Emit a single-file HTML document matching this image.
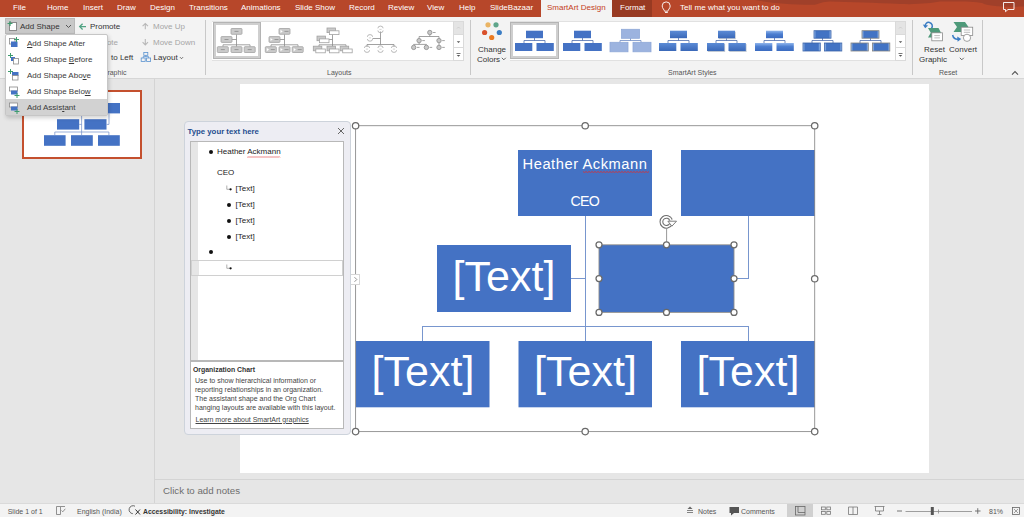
<!DOCTYPE html>
<html><head><meta charset="utf-8">
<style>
u{text-decoration-thickness:0.6px;text-underline-offset:1px}
*{margin:0;padding:0;box-sizing:border-box}
html,body{width:1024px;height:517px;overflow:hidden;background:#E6E6E6;font-family:"Liberation Sans",sans-serif;position:relative}
.a{position:absolute;white-space:nowrap}
.t{font-size:8px;line-height:10px;color:#fff;top:3px!important}
#tabs{left:0;top:0;width:1024px;height:17px;background:#B7472A}
#ribbon{left:0;top:17px;width:1024px;height:62px;background:#F3F3F3;border-bottom:1px solid #D6D6D6}
.r{font-size:8px;line-height:10px;color:#444;margin-top:1px}
.dis{color:#A6A6A6}
.sep{position:absolute;width:1px;background:#C8C8C8}
.lbl{font-size:7px;line-height:9px;color:#555}
</style></head><body>

<!-- TAB BAR -->
<div id="tabs" class="a"></div>
<div class="a t" style="left:13px;top:2px">File</div>
<div class="a t" style="left:47px;top:2px">Home</div>
<div class="a t" style="left:83px;top:2px">Insert</div>
<div class="a t" style="left:117px;top:2px">Draw</div>
<div class="a t" style="left:150px;top:2px">Design</div>
<div class="a t" style="left:189px;top:2px">Transitions</div>
<div class="a t" style="left:241px;top:2px">Animations</div>
<div class="a t" style="left:295px;top:2px">Slide Show</div>
<div class="a t" style="left:349px;top:2px">Record</div>
<div class="a t" style="left:388px;top:2px">Review</div>
<div class="a t" style="left:427px;top:2px">View</div>
<div class="a t" style="left:459px;top:2px">Help</div>
<div class="a t" style="left:490px;top:2px">SlideBazaar</div>
<div class="a" style="left:541px;top:0;width:71px;height:17px;background:#F3F3F3"></div>
<div class="a t" style="left:547px;top:2px;color:#C43E1C">SmartArt Design</div>
<div class="a" style="left:612px;top:0;width:40px;height:17px;background:#983A22"></div>
<div class="a t" style="left:620px;top:2px">Format</div>
<div class="a t" style="left:680px;top:2px;font-size:8.1px">Tell me what you want to do</div>
<svg class="a" style="left:0;top:0" width="1024" height="17">
<path d="M755 0C770 3 790 5 815 4.8C820 3.5 822 1.8 830 1.6C850 2 875 3 900 4C920 4.6 930 3.2 940 1.6C955 1.2 975 1.5 982 3C988 6.2 1000 7 1024 6.6V0z" fill="#A0402A"/>
<path d="M664.5 11.2c0-1.3-2.3-2.8-2.3-5.3a4 4 0 0 1 8 0c0 2.5-2.3 4-2.3 5.3z" fill="none" stroke="#fff" stroke-width="0.9"/><path d="M665 12.5h2.8" stroke="#fff" stroke-width="0.9"/>
<path d="M1003.5 2.5h10.5v7h-6l-2.5 2.2v-2.2h-2z" fill="none" stroke="#fff" stroke-width="0.9"/>
</svg>

<!-- RIBBON -->
<div id="ribbon" class="a"></div>

<!-- Group 1 -->
<div class="a" style="left:5px;top:18px;width:70px;height:16px;background:#C8C8C8;border:1px solid #B9B9B9"></div>
<svg class="a" style="left:6px;top:20px" width="14" height="12"><rect x="3.5" y="2.5" width="7" height="8" fill="#fff" stroke="#8A8A8A"/><path d="M4 1v5M1.5 3.5h5" stroke="#3E9C6E" stroke-width="1.2"/></svg>
<div class="a r" style="left:20px;top:21px;color:#333">Add Shape</div>
<svg class="a" style="left:65px;top:24px" width="7" height="5"><path d="M1 1l2.5 2.5L6 1" stroke="#555" fill="none"/></svg>
<svg class="a" style="left:0;top:0" width="200" height="80"><path d="M86 26.6H79.8M82.6 23.7l-2.9 2.9 2.9 2.9" stroke="#4FA383" stroke-width="1.3" fill="none"/><path d="M145.3 29.3V23.6M142.6 26.2l2.7-2.7 2.7 2.7" stroke="#B8B8B8" stroke-width="1.1" fill="none"/><path d="M145.3 39V44.8M142.6 42.2l2.7 2.7 2.7-2.7" stroke="#B8B8B8" stroke-width="1.1" fill="none"/><rect x="143.8" y="52.5" width="4" height="2.8" fill="none" stroke="#5A93D0" stroke-width="0.8"/><rect x="141.2" y="58" width="4" height="3.4" fill="none" stroke="#5A93D0" stroke-width="0.8"/><rect x="146.6" y="58" width="4" height="3.4" fill="none" stroke="#5A93D0" stroke-width="0.8"/><path d="M145.8 55.3v1.3M143.2 58v-1.4h5.4V58" stroke="#5A93D0" stroke-width="0.8" fill="none"/><path d="M180 57.2l1.5 1.5 1.5-1.5" stroke="#555" stroke-width="0.9" fill="none"/></svg>
<div class="a r" style="left:90px;top:21px;color:#333">Promote</div>
<div class="a r dis" style="left:90px;top:37px">Demote</div>
<div class="a r" style="left:111px;top:52px;color:#333">to Left</div>
<div class="a lbl" style="left:79px;top:68px">Create Graphic</div>

<div class="a r dis" style="left:153px;top:21px">Move Up</div>

<div class="a r dis" style="left:153px;top:37px">Move Down</div>

<div class="a r" style="left:153.6px;top:52px;color:#333">Layout</div>

<div class="sep" style="left:205px;top:20px;height:55px"></div>


<!-- RIBBON2 -->
<div class="a" style="left:212px;top:21px;width:241px;height:40px;background:#fff;border-top:1px solid #E1E1E1;border-bottom:1px solid #E1E1E1"></div>
<div class="a" style="left:213px;top:22px;width:48px;height:37px;border:1px solid #B4B4B4;box-shadow:inset 0 0 0 2px #CFCFCF"></div>
<svg class="a" style="left:0;top:0" width="1024" height="80"><path d="M236.5 34.3V46.7M231.7 39.5H236.5M223.0 46.7V44.8H250.0V46.7" stroke="#8A8A8A" stroke-width="0.8" fill="none"/><rect x="231.0" y="28.5" width="11" height="5.8" fill="#CACACA" stroke="#A2A2A2" stroke-width="0.8" rx="0.8"/><path d="M234.5 31.4h4" stroke="#8A8A8A" stroke-width="0.8"/><rect x="221.0" y="36.6" width="11" height="5.8" fill="#CACACA" stroke="#A2A2A2" stroke-width="0.8" rx="0.8"/><path d="M224.5 39.5h4" stroke="#8A8A8A" stroke-width="0.8"/><rect x="217.3" y="46.7" width="11" height="5.8" fill="#CACACA" stroke="#A2A2A2" stroke-width="0.8" rx="0.8"/><path d="M220.8 49.6h4" stroke="#8A8A8A" stroke-width="0.8"/><rect x="231.0" y="46.7" width="11" height="5.8" fill="#CACACA" stroke="#A2A2A2" stroke-width="0.8" rx="0.8"/><path d="M234.5 49.6h4" stroke="#8A8A8A" stroke-width="0.8"/><rect x="244.2" y="46.7" width="11" height="5.8" fill="#CACACA" stroke="#A2A2A2" stroke-width="0.8" rx="0.8"/><path d="M247.7 49.6h4" stroke="#8A8A8A" stroke-width="0.8"/><path d="M284.5 34.3V46.7M279.7 39.5H284.5M271.0 46.7V44.8H298.0V46.7" stroke="#8A8A8A" stroke-width="0.8" fill="none"/><rect x="279.0" y="28.5" width="11" height="5.8" fill="#CACACA" stroke="#A2A2A2" stroke-width="0.8" rx="0.8"/><path d="M280.5 29.8l2.2 1.6-2.2 1.6z" fill="#fff"/><path d="M284.5 31.4h4" stroke="#8A8A8A" stroke-width="0.8"/><rect x="269.0" y="36.6" width="11" height="5.8" fill="#CACACA" stroke="#A2A2A2" stroke-width="0.8" rx="0.8"/><path d="M270.5 37.9l2.2 1.6-2.2 1.6z" fill="#fff"/><path d="M274.5 39.5h4" stroke="#8A8A8A" stroke-width="0.8"/><rect x="265.3" y="46.7" width="11" height="5.8" fill="#CACACA" stroke="#A2A2A2" stroke-width="0.8" rx="0.8"/><path d="M266.8 48.0l2.2 1.6-2.2 1.6z" fill="#fff"/><path d="M270.8 49.6h4" stroke="#8A8A8A" stroke-width="0.8"/><rect x="279.0" y="46.7" width="11" height="5.8" fill="#CACACA" stroke="#A2A2A2" stroke-width="0.8" rx="0.8"/><path d="M280.5 48.0l2.2 1.6-2.2 1.6z" fill="#fff"/><path d="M284.5 49.6h4" stroke="#8A8A8A" stroke-width="0.8"/><rect x="292.2" y="46.7" width="11" height="5.8" fill="#CACACA" stroke="#A2A2A2" stroke-width="0.8" rx="0.8"/><path d="M293.7 48.0l2.2 1.6-2.2 1.6z" fill="#fff"/><path d="M297.7 49.6h4" stroke="#8A8A8A" stroke-width="0.8"/><path d="M332.5 34.3V46.7M327.7 39.5H332.5M319.0 46.7V44.8H346.0V46.7" stroke="#8A8A8A" stroke-width="0.8" fill="none"/><rect x="327.0" y="28.0" width="8.5" height="4.6" fill="#CACACA" stroke="#A2A2A2" stroke-width="0.8" /><rect x="329.5" y="30.8" width="9.5" height="3.8" fill="#fff" stroke="#A2A2A2" stroke-width="0.8" /><rect x="317.0" y="36.1" width="8.5" height="4.6" fill="#CACACA" stroke="#A2A2A2" stroke-width="0.8" /><rect x="319.5" y="38.9" width="9.5" height="3.8" fill="#fff" stroke="#A2A2A2" stroke-width="0.8" /><rect x="313.3" y="46.2" width="8.5" height="4.6" fill="#CACACA" stroke="#A2A2A2" stroke-width="0.8" /><rect x="315.8" y="49.0" width="9.5" height="3.8" fill="#fff" stroke="#A2A2A2" stroke-width="0.8" /><rect x="327.0" y="46.2" width="8.5" height="4.6" fill="#CACACA" stroke="#A2A2A2" stroke-width="0.8" /><rect x="329.5" y="49.0" width="9.5" height="3.8" fill="#fff" stroke="#A2A2A2" stroke-width="0.8" /><rect x="340.2" y="46.2" width="8.5" height="4.6" fill="#CACACA" stroke="#A2A2A2" stroke-width="0.8" /><rect x="342.7" y="49.0" width="9.5" height="3.8" fill="#fff" stroke="#A2A2A2" stroke-width="0.8" /><path d="M380.5 31.5V44.5M372.5 38.5H380.5M367.0 47V44.5H394.0V47" stroke="#8A8A8A" stroke-width="0.8" fill="none"/><path d="M377.9 28.3a2.6 2.2 0 0 1 5.2 0M377.9 30.5a2.6 2.2 0 0 0 5.2 0" stroke="#A8A8A8" stroke-width="0.8" fill="none"/><path d="M379.4 29.400000000000002h2.2" stroke="#B8B8B8" stroke-width="0.6"/><path d="M367.4 36.8a2.6 2.2 0 0 1 5.2 0M367.4 39.0a2.6 2.2 0 0 0 5.2 0" stroke="#A8A8A8" stroke-width="0.8" fill="none"/><path d="M368.9 37.9h2.2" stroke="#B8B8B8" stroke-width="0.6"/><path d="M364.4 48a2.6 2.2 0 0 1 5.2 0M364.4 50.2a2.6 2.2 0 0 0 5.2 0" stroke="#A8A8A8" stroke-width="0.8" fill="none"/><path d="M365.9 49.1h2.2" stroke="#B8B8B8" stroke-width="0.6"/><path d="M377.9 48a2.6 2.2 0 0 1 5.2 0M377.9 50.2a2.6 2.2 0 0 0 5.2 0" stroke="#A8A8A8" stroke-width="0.8" fill="none"/><path d="M379.4 49.1h2.2" stroke="#B8B8B8" stroke-width="0.6"/><path d="M391.4 48a2.6 2.2 0 0 1 5.2 0M391.4 50.2a2.6 2.2 0 0 0 5.2 0" stroke="#A8A8A8" stroke-width="0.8" fill="none"/><path d="M392.9 49.1h2.2" stroke="#B8B8B8" stroke-width="0.6"/><path d="M429.8 34.8V36.5M419.1 38.3V36.5H439V38.3M419.1 42.9V44.4H413.7V45.1M419.1 44.4H426.4V45.1M439 42.9V45.1" stroke="#8A8A8A" stroke-width="0.8" fill="none"/><circle cx="429.8" cy="32.5" r="2.2" fill="#C8C8C8" stroke="#8A8A8A" stroke-width="0.8"/><path d="M433.0 32.5h2.6" stroke="#8E8E8E" stroke-width="0.8"/><circle cx="419.1" cy="40.6" r="2.2" fill="#C8C8C8" stroke="#8A8A8A" stroke-width="0.8"/><path d="M422.3 40.6h2.6" stroke="#8E8E8E" stroke-width="0.8"/><circle cx="439" cy="40.6" r="2.2" fill="#C8C8C8" stroke="#8A8A8A" stroke-width="0.8"/><path d="M442.2 40.6h2.6" stroke="#8E8E8E" stroke-width="0.8"/><circle cx="413.7" cy="47.4" r="2.2" fill="#C8C8C8" stroke="#8A8A8A" stroke-width="0.8"/><path d="M416.9 47.4h2.6" stroke="#8E8E8E" stroke-width="0.8"/><circle cx="426.4" cy="47.4" r="2.2" fill="#C8C8C8" stroke="#8A8A8A" stroke-width="0.8"/><path d="M429.59999999999997 47.4h2.6" stroke="#8E8E8E" stroke-width="0.8"/><circle cx="439" cy="47.4" r="2.2" fill="#C8C8C8" stroke="#8A8A8A" stroke-width="0.8"/><path d="M442.2 47.4h2.6" stroke="#8E8E8E" stroke-width="0.8"/></svg>
<div class="a" style="left:453px;top:21px;width:11px;height:40px;background:#fff;border:1px solid #DADADA"></div><div class="a" style="left:453px;top:21px;width:11px;height:14px;background:#E4E4E4;border:1px solid #DADADA"></div><div class="a" style="left:453px;top:47px;width:11px;height:1px;background:#DADADA"></div><svg class="a" style="left:453px;top:21px" width="11" height="40"><path d="M4 7.5l1.5-1.5L7 7.5" stroke="#C8C8C8" fill="none" stroke-width="0.8"/><path d="M3.8 20.2h3.4L5.5 22z" fill="#555"/><path d="M3.5 32.5h4" stroke="#555" stroke-width="0.8"/><path d="M3.8 34h3.4L5.5 35.8z" fill="#555"/></svg>
<div class="a lbl" style="left:327px;top:68px">Layouts</div>
<div class="sep" style="left:470px;top:20px;height:55px"></div>
<svg class="a" style="left:478px;top:20px" width="28" height="22"><circle cx="10" cy="4.8" r="2.6" fill="#EAB464"/><circle cx="18" cy="4.8" r="2.6" fill="#5FA58A"/><circle cx="6.6" cy="12.5" r="2.6" fill="#D9512C"/><circle cx="21.3" cy="12.5" r="2.6" fill="#3B7DC4"/><circle cx="13.7" cy="17.5" r="2.6" fill="#EA7A22"/></svg>
<div class="a r" style="left:478px;top:44px;color:#333">Change</div>
<div class="a r" style="left:477px;top:54px;color:#333">Colors</div>
<svg class="a" style="left:501px;top:57px" width="6" height="4"><path d="M0.8 0.8l2 2 2-2" stroke="#555" fill="none" stroke-width="0.9"/></svg>
<div class="a" style="left:510px;top:21px;width:385px;height:40px;background:#fff;border-top:1px solid #E1E1E1;border-bottom:1px solid #E1E1E1"></div>
<div class="a" style="left:510px;top:22px;width:49px;height:37px;border:1px solid #B4B4B4;box-shadow:inset 0 0 0 2px #CFCFCF"></div>
<svg class="a" style="left:0;top:0" width="1024" height="80"><defs><linearGradient id="g1" x1="0" y1="0" x2="0" y2="1"><stop offset="0" stop-color="#5B8BD6"/><stop offset="1" stop-color="#3A68B8"/></linearGradient><linearGradient id="g2" x1="0" y1="0" x2="0" y2="1"><stop offset="0" stop-color="#8EB4EC"/><stop offset="0.45" stop-color="#4C7ED0"/><stop offset="1" stop-color="#3B6BC0"/></linearGradient><linearGradient id="g3" x1="0" y1="0" x2="1" y2="0"><stop offset="0" stop-color="#A9CBF5"/><stop offset="0.12" stop-color="#4273C4"/><stop offset="0.88" stop-color="#4273C4"/><stop offset="1" stop-color="#A9CBF5"/></linearGradient></defs><path d="M534.5 38V40.5M524.0 43V40.5H545.0V43" stroke="#4F6FAE" stroke-width="0.8" fill="none"/><rect x="526.0" y="30.7" width="17" height="7.5" fill="#4472C4" stroke="none" stroke-width="0.8"/><rect x="515.0" y="43" width="17.3" height="8" fill="#4472C4" stroke="none" stroke-width="0.8"/><rect x="536.5" y="43" width="17.3" height="8" fill="#4472C4" stroke="none" stroke-width="0.8"/><path d="M582.5 38V40.5M572.0 43V40.5H593.0V43" stroke="#4F6FAE" stroke-width="0.8" fill="none"/><rect x="574.0" y="30.7" width="17" height="7.5" fill="#4472C4" stroke="none" stroke-width="0.8"/><rect x="563.0" y="43" width="17.3" height="8" fill="#4472C4" stroke="none" stroke-width="0.8"/><rect x="584.5" y="43" width="17.3" height="8" fill="#4472C4" stroke="none" stroke-width="0.8"/><path d="M630.5 38V40.5M620.0 43V40.5H641.0V43" stroke="#6E8CC4" stroke-width="0.8" fill="none"/><rect x="621.5" y="29.3" width="18" height="9" fill="#9CB3DF" stroke="#8FA8D8" stroke-width="0.8"/><rect x="610.0" y="42.3" width="18" height="9.5" fill="#9CB3DF" stroke="#8FA8D8" stroke-width="0.8"/><rect x="633.0" y="42.3" width="18" height="9.5" fill="#9CB3DF" stroke="#8FA8D8" stroke-width="0.8"/><path d="M678.5 38V40.5M668.0 43V40.5H689.0V43" stroke="#4F6FAE" stroke-width="0.8" fill="none"/><rect x="670.0" y="30.7" width="17" height="7.5" fill="url(#g1)" stroke="none" stroke-width="0.8"/><rect x="659.0" y="43" width="17.3" height="8" fill="url(#g1)" stroke="none" stroke-width="0.8"/><rect x="680.5" y="43" width="17.3" height="8" fill="url(#g1)" stroke="none" stroke-width="0.8"/><path d="M726.5 38V40.5M716.0 43V40.5H737.0V43" stroke="#4F6FAE" stroke-width="0.8" fill="none"/><rect x="718.8" y="31.7" width="17" height="7.5" fill="#9AA6B8" opacity="0.6"/><rect x="707.8" y="44" width="17.3" height="8" fill="#9AA6B8" opacity="0.6"/><rect x="729.3" y="44" width="17.3" height="8" fill="#9AA6B8" opacity="0.6"/><rect x="718.0" y="30.7" width="17" height="7.5" fill="url(#g1)" stroke="none" stroke-width="0.8"/><rect x="707.0" y="43" width="17.3" height="8" fill="url(#g1)" stroke="none" stroke-width="0.8"/><rect x="728.5" y="43" width="17.3" height="8" fill="url(#g1)" stroke="none" stroke-width="0.8"/><path d="M774.5 38V40.5M764.0 43V40.5H785.0V43" stroke="#4F6FAE" stroke-width="0.8" fill="none"/><rect x="766.0" y="30.7" width="17" height="7.5" fill="url(#g2)" stroke="none" stroke-width="0.8"/><rect x="755.0" y="43" width="17.3" height="8" fill="url(#g2)" stroke="none" stroke-width="0.8"/><rect x="776.5" y="43" width="17.3" height="8" fill="url(#g2)" stroke="none" stroke-width="0.8"/><path d="M822.5 38V40.5M812.0 43V40.5H833.0V43" stroke="#4F6FAE" stroke-width="0.8" fill="none"/><rect x="814.0" y="30.7" width="17" height="7.5" fill="url(#g3)" stroke="#3B63A8" stroke-width="0.8"/><rect x="803.0" y="43" width="17.3" height="8" fill="url(#g3)" stroke="#3B63A8" stroke-width="0.8"/><rect x="824.5" y="43" width="17.3" height="8" fill="url(#g3)" stroke="#3B63A8" stroke-width="0.8"/><path d="M870.5 38V40.5M860.0 43V40.5H881.0V43" stroke="#4F6FAE" stroke-width="0.8" fill="none"/><rect x="862.0" y="30.7" width="17" height="7.5" fill="url(#g3)" stroke="#7F7F7F" stroke-width="0.8"/><rect x="851.0" y="43" width="17.3" height="8" fill="url(#g3)" stroke="#7F7F7F" stroke-width="0.8"/><rect x="872.5" y="43" width="17.3" height="8" fill="url(#g3)" stroke="#7F7F7F" stroke-width="0.8"/></svg>
<div class="a" style="left:895px;top:21px;width:11px;height:40px;background:#fff;border:1px solid #DADADA"></div><div class="a" style="left:895px;top:21px;width:11px;height:14px;background:#E4E4E4;border:1px solid #DADADA"></div><div class="a" style="left:895px;top:47px;width:11px;height:1px;background:#DADADA"></div><svg class="a" style="left:895px;top:21px" width="11" height="40"><path d="M4 7.5l1.5-1.5L7 7.5" stroke="#C8C8C8" fill="none" stroke-width="0.8"/><path d="M3.8 20.2h3.4L5.5 22z" fill="#555"/><path d="M3.5 32.5h4" stroke="#555" stroke-width="0.8"/><path d="M3.8 34h3.4L5.5 35.8z" fill="#555"/></svg>
<div class="a lbl" style="left:668px;top:68px">SmartArt Styles</div>
<div class="sep" style="left:912px;top:20px;height:55px"></div>
<svg class="a" style="left:0;top:0" width="1024" height="80"><path d="M925.2 26.8A3.6 3.6 0 1 1 931.5 28.2" stroke="#3B7DC4" stroke-width="1.5" fill="none"/><path d="M922.8 24.6l2.4 3.6 2.9-2.6z" fill="#3B7DC4"/><path d="M928 28h10.5l2.5 4.8-2.5 4.8H928l2.8-4.8z" fill="#4E9A7A"/><rect x="931.8" y="32.8" width="10.6" height="8" fill="#fff" stroke="#8A8A8A" stroke-width="0.8"/><path d="M934.3 35.6h5.6M934.3 37.9h5.6" stroke="#A0A0A0" stroke-width="0.7"/><path d="M953.5 22h11.5l3.5 5-3.5 5h-11.5l3.5-5z" fill="#4E9A7A"/><rect x="961.2" y="27.2" width="11.5" height="8.3" fill="#fff" stroke="#8A8A8A" stroke-width="0.8"/><path d="M963.8 30h6.4M963.8 32.3h6.4" stroke="#A0A0A0" stroke-width="0.7"/><circle cx="967" cy="37.8" r="3.6" fill="#fff" stroke="#8A8A8A" stroke-width="0.8"/><path d="M952.6 35c0.6 3.4 3.2 4.6 6 4" stroke="#3B7DC4" stroke-width="1.5" fill="none"/><path d="M957.2 36.5l4 2.6-3.6 2.6z" fill="#3B7DC4"/><path d="M1012 74.6l3-3 3 3" stroke="#555" fill="none" stroke-width="1.1"/></svg>
<div class="a r" style="left:924px;top:44px;color:#333">Reset</div>
<div class="a r" style="left:919px;top:54px;color:#333">Graphic</div>
<div class="a r" style="left:949px;top:44px;color:#333">Convert</div>
<svg class="a" style="left:959px;top:57px" width="6" height="4"><path d="M0.8 0.8l2 2 2-2" stroke="#555" fill="none" stroke-width="0.9"/></svg>
<div class="a lbl" style="left:939px;top:68px">Reset</div>
<div class="sep" style="left:982px;top:20px;height:55px"></div>
<!-- /RIBBON2 -->
<!-- WORKSPACE -->
<div class="a" style="left:154px;top:79px;width:1px;height:424px;background:#D4D4D4"></div>
<!-- thumbnail -->
<div class="a" style="left:22px;top:90px;width:120px;height:69px;border:2px solid #C4502E;background:#fff"></div>

<!-- slide -->
<div class="a" style="left:240px;top:84px;width:689px;height:389px;background:#fff"></div>

<!-- MAIN2 -->
<svg class="a" style="left:24px;top:92px" width="116" height="65"><rect x="46" y="11" width="23.200000000000003" height="10.400000000000006" fill="#4472C4"/><rect x="74" y="11" width="22" height="10.400000000000006" fill="#4472C4"/><rect x="33" y="27.200000000000003" width="22.200000000000003" height="10.399999999999991" fill="#4472C4"/><rect x="60.400000000000006" y="27.200000000000003" width="22.099999999999994" height="10.399999999999991" fill="#4472C4"/><rect x="20" y="43.19999999999999" width="21.599999999999994" height="10.600000000000023" fill="#4472C4"/><rect x="47" y="43.19999999999999" width="21.799999999999997" height="10.600000000000023" fill="#4472C4"/><rect x="74" y="43.19999999999999" width="21.799999999999997" height="10.600000000000023" fill="#4472C4"/><path d="M57.599999999999994 21.400000000000006V43.19999999999999M30.799999999999997 43.19999999999999V40H84.9V43.19999999999999M55.2 32.400000000000006H57.599999999999994M82.5 32.400000000000006H85V21.400000000000006" stroke="#6F8CC8" stroke-width="0.7" fill="none"/></svg>
<svg class="a" style="left:240px;top:84px" width="689" height="389"><path d="M345.29999999999995 132.2V257M331 194.2H345.29999999999995M182.3 257V242.3H508V257M494 194.39999999999998H508V132.3" stroke="#7896CE" stroke-width="1" fill="none" shape-rendering="crispEdges"/><rect x="278" y="66" width="134" height="66" fill="#4472C4" stroke="none" stroke-width="0"/><rect x="441" y="66" width="134" height="66" fill="#4472C4" stroke="none" stroke-width="0"/><rect x="197" y="161" width="134" height="67" fill="#4472C4" stroke="none" stroke-width="0"/><rect x="359" y="161" width="135" height="67" fill="#4472C4" stroke="none" stroke-width="0"/><rect x="116" y="257" width="133.5" height="66.30000000000001" fill="#4472C4" stroke="none" stroke-width="0"/><rect x="278.5" y="257" width="133.5" height="66.30000000000001" fill="#4472C4" stroke="none" stroke-width="0"/><rect x="441" y="257" width="134" height="66.30000000000001" fill="#4472C4" stroke="none" stroke-width="0"/><rect x="115.60000000000002" y="41.7" width="459.1" height="305.90000000000003" fill="none" stroke="#8C8C8C" stroke-width="0.9"/><rect x="359" y="160.8" width="135" height="67.6" fill="none" stroke="#8C8C8C" stroke-width="0.9"/><path d="M426.6 145V160.8" stroke="#8C8C8C" stroke-width="0.9"/><circle cx="115.60000000000002" cy="41.7" r="3.2" fill="#fff" stroke="#6A6A6A" stroke-width="1.25"/><circle cx="115.60000000000002" cy="194.7" r="3.2" fill="#fff" stroke="#6A6A6A" stroke-width="1.25"/><circle cx="115.60000000000002" cy="347.6" r="3.2" fill="#fff" stroke="#6A6A6A" stroke-width="1.25"/><circle cx="345.20000000000005" cy="41.7" r="3.2" fill="#fff" stroke="#6A6A6A" stroke-width="1.25"/><circle cx="345.20000000000005" cy="347.6" r="3.2" fill="#fff" stroke="#6A6A6A" stroke-width="1.25"/><circle cx="574.7" cy="41.7" r="3.2" fill="#fff" stroke="#6A6A6A" stroke-width="1.25"/><circle cx="574.7" cy="194.7" r="3.2" fill="#fff" stroke="#6A6A6A" stroke-width="1.25"/><circle cx="574.7" cy="347.6" r="3.2" fill="#fff" stroke="#6A6A6A" stroke-width="1.25"/><circle cx="359" cy="160.8" r="3" fill="#fff" stroke="#6A6A6A" stroke-width="1.25"/><circle cx="359" cy="194.5" r="3" fill="#fff" stroke="#6A6A6A" stroke-width="1.25"/><circle cx="359" cy="228.39999999999998" r="3" fill="#fff" stroke="#6A6A6A" stroke-width="1.25"/><circle cx="426.5" cy="160.8" r="3" fill="#fff" stroke="#6A6A6A" stroke-width="1.25"/><circle cx="426.5" cy="228.39999999999998" r="3" fill="#fff" stroke="#6A6A6A" stroke-width="1.25"/><circle cx="494" cy="160.8" r="3" fill="#fff" stroke="#6A6A6A" stroke-width="1.25"/><circle cx="494" cy="194.5" r="3" fill="#fff" stroke="#6A6A6A" stroke-width="1.25"/><circle cx="494" cy="228.39999999999998" r="3" fill="#fff" stroke="#6A6A6A" stroke-width="1.25"/><path d="M430.9 140.0A5 5 0 1 1 430.99999999999994 135.9" stroke="#6E6E6E" stroke-width="3.8" fill="none"/><path d="M430.9 140.0A5 5 0 1 1 430.99999999999994 135.9" stroke="#fff" stroke-width="1.7" fill="none"/><path d="M427.9 137.20000000000002L436.49999999999994 137.20000000000002L431.9 142.20000000000002z" fill="#fff" stroke="#6E6E6E" stroke-width="0.9"/></svg>
<div class="a" style="left:522.5px;top:156.5px;font-size:14.7px;line-height:14.7px;color:#fff;letter-spacing:0.55px">Heather Ackmann</div>
<svg class="a" style="left:583px;top:169.5px" width="66" height="3"><path d="M0 1.5l1.5 1l1.5 -1l1.5 1l1.5 -1l1.5 1l1.5 -1l1.5 1l1.5 -1l1.5 1l1.5 -1l1.5 1l1.5 -1l1.5 1l1.5 -1l1.5 1l1.5 -1l1.5 1l1.5 -1l1.5 1l1.5 -1l1.5 1l1.5 -1l1.5 1l1.5 -1l1.5 1l1.5 -1l1.5 1l1.5 -1l1.5 1l1.5 -1l1.5 1l1.5 -1l1.5 1l1.5 -1l1.5 1l1.5 -1l1.5 1l1.5 -1l1.5 1l1.5 -1l1.5 1l1.5 -1l1.5 1l1.5 -1" stroke="#E03030" stroke-width="0.8" fill="none"/></svg>
<div class="a" style="left:570.5px;top:193.5px;font-size:14.2px;line-height:14.2px;color:#fff;letter-spacing:-0.75px">CEO</div>
<div class="a" style="left:437px;top:255px;width:134px;text-align:center;font-size:43px;line-height:43px;color:#fff">[Text]</div>
<div class="a" style="left:356px;top:350px;width:134px;text-align:center;font-size:43px;line-height:43px;color:#fff">[Text]</div>
<div class="a" style="left:518.5px;top:350px;width:134px;text-align:center;font-size:43px;line-height:43px;color:#fff">[Text]</div>
<div class="a" style="left:681px;top:350px;width:134px;text-align:center;font-size:43px;line-height:43px;color:#fff">[Text]</div>
<div class="a" style="left:5px;top:34px;width:103px;height:82px;background:#fff;border:1px solid #C6C6C6;border-radius:2px;box-shadow:1px 2px 4px rgba(0,0,0,0.18)"></div>
<div class="a" style="left:6px;top:99px;width:101px;height:16px;background:#D2D2D2"></div>
<div class="a" style="left:27px;top:39.1px;font-size:8px;line-height:10px;color:#3A3A3A"><u>A</u>dd Shape After</div>
<div class="a" style="left:27px;top:55.1px;font-size:8px;line-height:10px;color:#3A3A3A">Add Shape <u>B</u>efore</div>
<div class="a" style="left:27px;top:71.1px;font-size:8px;line-height:10px;color:#3A3A3A">Add Shape Abo<u>v</u>e</div>
<div class="a" style="left:27px;top:87.1px;font-size:8px;line-height:10px;color:#3A3A3A">Add Shape Belo<u>w</u></div>
<div class="a" style="left:27px;top:103.1px;font-size:8px;line-height:10px;color:#3A3A3A">Add Assis<u>t</u>ant</div>
<svg class="a" style="left:7px;top:36px" width="14" height="80"><rect x="2.5" y="2.5" width="5.5" height="5.5" fill="none" stroke="#8A8A8A" stroke-width="0.8"/><rect x="4" y="5.5" width="6.5" height="5.5" fill="#4472C4"/><path d="M9.5 1v5M7 3.5h5" stroke="#3E9C6E" stroke-width="1"/><path d="M3.5 17v5M1 19.5h5" stroke="#3E9C6E" stroke-width="1"/><rect x="4" y="21" width="4" height="4" fill="#4472C4"/><rect x="6.5" y="22.5" width="5" height="5.5" fill="#fff" stroke="#8A8A8A" stroke-width="0.8"/><path d="M3.5 33v5M1 35.5h5" stroke="#3E9C6E" stroke-width="1"/><rect x="5" y="36" width="6.5" height="4" fill="#4472C4"/><rect x="5.5" y="39.5" width="5.5" height="4.5" fill="#fff" stroke="#8A8A8A" stroke-width="0.8"/><rect x="2.5" y="51" width="8" height="4" fill="#fff" stroke="#8A8A8A" stroke-width="0.8"/><rect x="4" y="54.5" width="6.5" height="4" fill="#4472C4"/><path d="M10 57v5M7.5 59.5h5" stroke="#3E9C6E" stroke-width="1"/><rect x="2.5" y="67" width="8" height="4" fill="#fff" stroke="#8A8A8A" stroke-width="0.8"/><rect x="4" y="70.5" width="6.5" height="4" fill="#4472C4"/><path d="M10 73v5M7.5 75.5h5" stroke="#3E9C6E" stroke-width="1"/></svg>
<!-- /MAIN2 -->
<!-- PANE2 -->
<div class="a" style="left:184px;top:121px;width:167px;height:314px;background:#EDEDF3;border:1px solid #CDD3DB;border-radius:4px"></div>
<div class="a" style="left:187.5px;top:126.5px;font-size:7.8px;line-height:10px;font-weight:bold;color:#1F4E8F">Type your text here</div>
<svg class="a" style="left:337px;top:127px" width="8" height="8"><path d="M1 1l6 6M7 1L1 7" stroke="#666" stroke-width="1"/></svg>
<div class="a" style="left:190px;top:141px;width:154px;height:220px;background:#fff;border:1px solid #B8B8B8"></div>
<div class="a" style="left:191px;top:142px;width:7px;height:218px;background:#E6E6E6"></div>
<div class="a" style="left:191px;top:260px;width:152px;height:16px;background:#fff;border:1px solid #D0D0D0"></div>
<div class="a" style="left:192px;top:261px;width:7px;height:14px;background:#E6E6E6"></div>
<div class="a" style="left:209.4px;top:149.5px;width:4px;height:4px;border-radius:50%;background:#111"></div>
<div class="a" style="left:217px;top:146.5px;font-size:8px;line-height:10px;color:#222;">Heather Ackmann</div>
<svg class="a" style="left:247px;top:154.5px" width="34" height="3"><path d="M0 1.5l1 1l1 -1l1 1l1 -1l1 1l1 -1l1 1l1 -1l1 1l1 -1l1 1l1 -1l1 1l1 -1l1 1l1 -1l1 1l1 -1l1 1l1 -1l1 1l1 -1l1 1l1 -1l1 1l1 -1l1 1l1 -1l1 1l1 -1l1 1l1 -1l1 1" stroke="#E03030" stroke-width="0.6" fill="none"/></svg>
<div class="a" style="left:217px;top:167.7px;font-size:8px;line-height:10px;color:#222;">CEO</div>
<svg class="a" style="left:225px;top:184.8px" width="8" height="7"><path d="M1.8 0.5V4.3H5" stroke="#9A9A9A" stroke-width="0.8" fill="none"/><circle cx="5.6" cy="4.3" r="1.15" fill="#111"/></svg>
<div class="a" style="left:235.5px;top:183.8px;font-size:8px;line-height:10px;color:#222;">[Text]</div>
<div class="a" style="left:226.9px;top:202.5px;width:4px;height:4px;border-radius:50%;background:#111"></div>
<div class="a" style="left:235.5px;top:199.5px;font-size:8px;line-height:10px;color:#222;">[Text]</div>
<div class="a" style="left:226.9px;top:218.5px;width:4px;height:4px;border-radius:50%;background:#111"></div>
<div class="a" style="left:235.5px;top:215.5px;font-size:8px;line-height:10px;color:#222;">[Text]</div>
<div class="a" style="left:226.9px;top:234.5px;width:4px;height:4px;border-radius:50%;background:#111"></div>
<div class="a" style="left:235.5px;top:231.5px;font-size:8px;line-height:10px;color:#222;">[Text]</div>
<div class="a" style="left:209.3px;top:250.3px;width:4px;height:4px;border-radius:50%;background:#111"></div>
<svg class="a" style="left:225px;top:264px" width="8" height="7"><path d="M1.8 0.5V4.3H5" stroke="#9A9A9A" stroke-width="0.8" fill="none"/><circle cx="5.6" cy="4.3" r="1.15" fill="#111"/></svg>
<div class="a" style="left:190px;top:361px;width:154px;height:68px;background:#fff;border:1px solid #B8B8B8"></div>
<div class="a" style="left:193px;top:364.5px;font-size:6.9px;line-height:9px;font-weight:bold;color:#333">Organization Chart</div>
<div class="a" style="left:195px;top:376px;font-size:7px;line-height:9px;color:#444">Use to show hierarchical information or</div>
<div class="a" style="left:195px;top:385px;font-size:7px;line-height:9px;color:#444">reporting relationships in an organization.</div>
<div class="a" style="left:195px;top:394px;font-size:7px;line-height:9px;color:#444">The assistant shape and the Org Chart</div>
<div class="a" style="left:195px;top:403px;font-size:7px;line-height:9px;color:#444">hanging layouts are available with this layout.</div>
<div class="a" style="left:195.5px;top:414.5px;font-size:7px;line-height:9px;color:#444;text-decoration:underline">Learn more about SmartArt graphics</div>
<div class="a" style="left:351px;top:274px;width:9px;height:11px;background:#fff;border:1px solid #D6D6D6;border-left:none"></div>
<svg class="a" style="left:352px;top:276px" width="7" height="7"><path d="M2.5 1.2l2.3 2.3-2.3 2.3" stroke="#777" stroke-width="0.8" fill="none"/></svg>
<!-- /PANE2 -->
<!-- notes -->
<div class="a" style="left:155px;top:479px;width:869px;height:1px;background:#D4D4D4"></div>
<div class="a" style="left:163px;top:485px;font-size:9.7px;line-height:12px;color:#6E6E6E">Click to add notes</div>

<!-- STATUS BAR -->
<div class="a" style="left:0;top:503px;width:1024px;height:14px;background:#F3F3F3;border-top:1px solid #DADADA"></div>

<!-- STATUS2 -->
<div class="a" style="left:7.7px;top:506.5px;font-size:7px;line-height:9px;color:#555;">Slide 1 of 1</div>
<div class="a" style="left:77px;top:506.5px;font-size:7px;line-height:9px;color:#555;">English (India)</div>
<div class="a" style="left:143px;top:506.5px;font-size:7px;line-height:9px;color:#555;font-weight:bold;color:#333;font-size:6.85px">Accessibility: Investigate</div>
<div class="a" style="left:698px;top:506.5px;font-size:7px;line-height:9px;color:#555;">Notes</div>
<div class="a" style="left:741px;top:506.5px;font-size:7px;line-height:9px;color:#555;">Comments</div>
<div class="a" style="left:787px;top:504px;width:26px;height:13px;background:#D0D0D0"></div>
<div class="a" style="left:989px;top:506.5px;font-size:7px;line-height:9px;color:#555;">81%</div>
<svg class="a" style="left:0;top:500px" width="1024" height="17"><path d="M56.5 6.5h4v8h-4zM60.5 6.5h4.5" stroke="#777" stroke-width="0.8" fill="none"/><path d="M61.5 10.5l1.3 1.3 2.5-3" stroke="#777" stroke-width="0.8" fill="none"/><path d="M135 6.2a4 4 0 1 0 -2.2 7.5" stroke="#555" stroke-width="0.9" fill="none"/><path d="M135.5 9.5l4.5 5M140 9.5l-4.5 5" stroke="#333" stroke-width="1"/><path d="M687 10.5h6M687 12.5h6" stroke="#666" stroke-width="0.8"/><path d="M687.5 9l2.5-2.5 2.5 2.5z" fill="#666"/><path d="M729.5 7h9.5v6h-5l-3 2.5v-2.5h-1.5z" fill="#555"/><rect x="795.5" y="6.5" width="9.5" height="8.5" fill="none" stroke="#666" stroke-width="0.8"/><path d="M798 6.5v6h7" stroke="#666" stroke-width="0.8" fill="none"/><rect x="821.5" y="7" width="3.8" height="2.8" fill="none" stroke="#777" stroke-width="0.8"/><rect x="826.8" y="7" width="3.8" height="2.8" fill="none" stroke="#777" stroke-width="0.8"/><rect x="821.5" y="11.5" width="3.8" height="2.8" fill="none" stroke="#777" stroke-width="0.8"/><rect x="826.8" y="11.5" width="3.8" height="2.8" fill="none" stroke="#777" stroke-width="0.8"/><path d="M848.5 7h4.5v7.5h-4.5zM853 7h4.5v7.5H853" fill="none" stroke="#777" stroke-width="0.8"/><path d="M874.5 6.5h10M875.5 6.5v4.5h8v-4.5M879.5 11v3M877.5 14.5h4" fill="none" stroke="#777" stroke-width="0.8"/><path d="M897 11h5" stroke="#666" stroke-width="0.9"/><path d="M905.5 11.5h66.5" stroke="#888" stroke-width="0.8"/><rect x="930.8" y="7" width="3" height="8" fill="#555"/><path d="M938.5 9.5v4" stroke="#888" stroke-width="0.8"/><path d="M975 11h5.5M977.75 8.2v5.6" stroke="#666" stroke-width="0.9"/><rect x="1012.5" y="7.5" width="7" height="7" stroke="#666" stroke-width="0.8" fill="none"/><path d="M1014 9l4 4M1018 9l-4 4" stroke="#666" stroke-width="0.6"/></svg>
<!-- /STATUS2 -->
</body></html>
